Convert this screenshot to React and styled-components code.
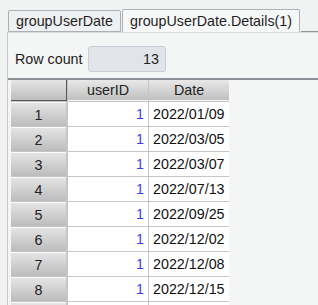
import React from "react";
import styled, { createGlobalStyle } from "styled-components";

const GlobalStyle = createGlobalStyle`
  html, body {
    margin: 0;
    padding: 0;
    background: #f1f2f2;
    font-family: "Liberation Sans", Arial, sans-serif;
    overflow: hidden;
  }
`;

const rows = [
  "2022/01/09",
  "2022/03/05",
  "2022/03/07",
  "2022/07/13",
  "2022/09/25",
  "2022/12/02",
  "2022/12/08",
  "2022/12/15",
];

const App = () => {
  return (
    <>
      <GlobalStyle />
      <Page>
        <TabBar>
          <Tab>groupUserDate</Tab>
          <Tab active>groupUserDate.Details(1)</Tab>
          <TabFill />
        </TabBar>
        <Panel>
          <CountRow>
            <Label>Row count</Label>
            <CountBox>13</CountBox>
          </CountRow>
          <GridArea>
            <Grid>
              <Corner />
              <HeadCell>userID</HeadCell>
              <HeadCell>Date</HeadCell>
              {rows.map((d, i) => (
                <React.Fragment key={i}>
                  <RowHead>{i + 1}</RowHead>
                  <NumCell>1</NumCell>
                  <Cell>{d}</Cell>
                </React.Fragment>
              ))}
              {/* next row only peeks in at the bottom edge */}
              <RowHead />
              <NumCell />
              <Cell />
            </Grid>
          </GridArea>
        </Panel>
      </Page>
    </>
  );
};

export default App;

const Page = styled.div`
  width: 318px;
  height: 305px;
  overflow: hidden;
`;

const TabBar = styled.div`
  display: flex;
  align-items: flex-end;
  padding: 9px 0 0 8px;
  height: 23px;
`;

const Tab = styled.div`
  box-sizing: border-box;
  height: ${p => (p.active ? "23px" : "22px")};
  padding: 0 7px;
  margin-right: 1px;
  display: flex;
  align-items: center;
  font-size: 14.3px;
  color: #1e1e1e;
  background: ${p => (p.active ? "#f7f8f8" : "#eef0f1")};
  border: 1px solid #aab0b5;
  border-bottom: ${p => (p.active ? "none" : "1px solid #aab0b5")};
  border-radius: 2px 2px 0 0;
`;

const TabFill = styled.div`
  flex: 1;
  height: 1px;
  background: #8e959a;
`;

const Panel = styled.div`
  margin-left: 7px;
  border-left: 1px solid #c4c8cc;
  border-top: 1px solid #d8dbde;
  background: #f4f5f5;
  height: 282px;
`;

const CountRow = styled.div`
  display: flex;
  align-items: center;
  padding: 13px 0 6px 7px;
`;

const Label = styled.span`
  font-size: 14.3px;
  color: #222;
  width: 73px;
`;

const CountBox = styled.div`
  box-sizing: border-box;
  width: 78px;
  height: 26px;
  background: #e1e4e9;
  border: 1px solid #c9cdd3;
  border-radius: 3px;
  font-size: 14.3px;
  color: #222;
  text-align: right;
  line-height: 24px;
  padding-right: 6px;
`;

const GridArea = styled.div`
  border-top: 2px solid #8a9095;
  padding-left: 3px;
  background: #f4f5f5;
`;

const Grid = styled.div`
  display: grid;
  grid-template-columns: 56px 80px 80px;
  grid-template-rows: 21px;
  grid-auto-rows: 24px;
  width: 218px;
  background: #c6c6c6;
  column-gap: 1px;
  row-gap: 1px;
`;

const Corner = styled.div`
  background: linear-gradient(#e6e6e6, #bdbdbd);
  border-right: 1px solid #555;
  border-bottom: 1px solid #555;
`;

const HeadCell = styled.div`
  background: linear-gradient(#e8e8e8, #c0c0c0);
  font-size: 14.3px;
  color: #222;
  display: flex;
  align-items: center;
  justify-content: center;
  border-bottom: 1px solid #f4f4f4;
`;

const RowHead = styled.div`
  background: linear-gradient(#e4e4e4, #bcbcbc);
  border-top: 1px solid #fafafa;
  font-size: 14.3px;
  color: #222;
  display: flex;
  align-items: center;
  justify-content: center;
  margin-right: 1px;
`;

const Cell = styled.div`
  background: #fff;
  font-size: 14.3px;
  color: #111;
  display: flex;
  align-items: center;
  padding-left: 4px;
`;

const NumCell = styled(Cell)`
  justify-content: flex-end;
  padding: 0 4px 0 0;
  color: #3b3bf0;
`;
